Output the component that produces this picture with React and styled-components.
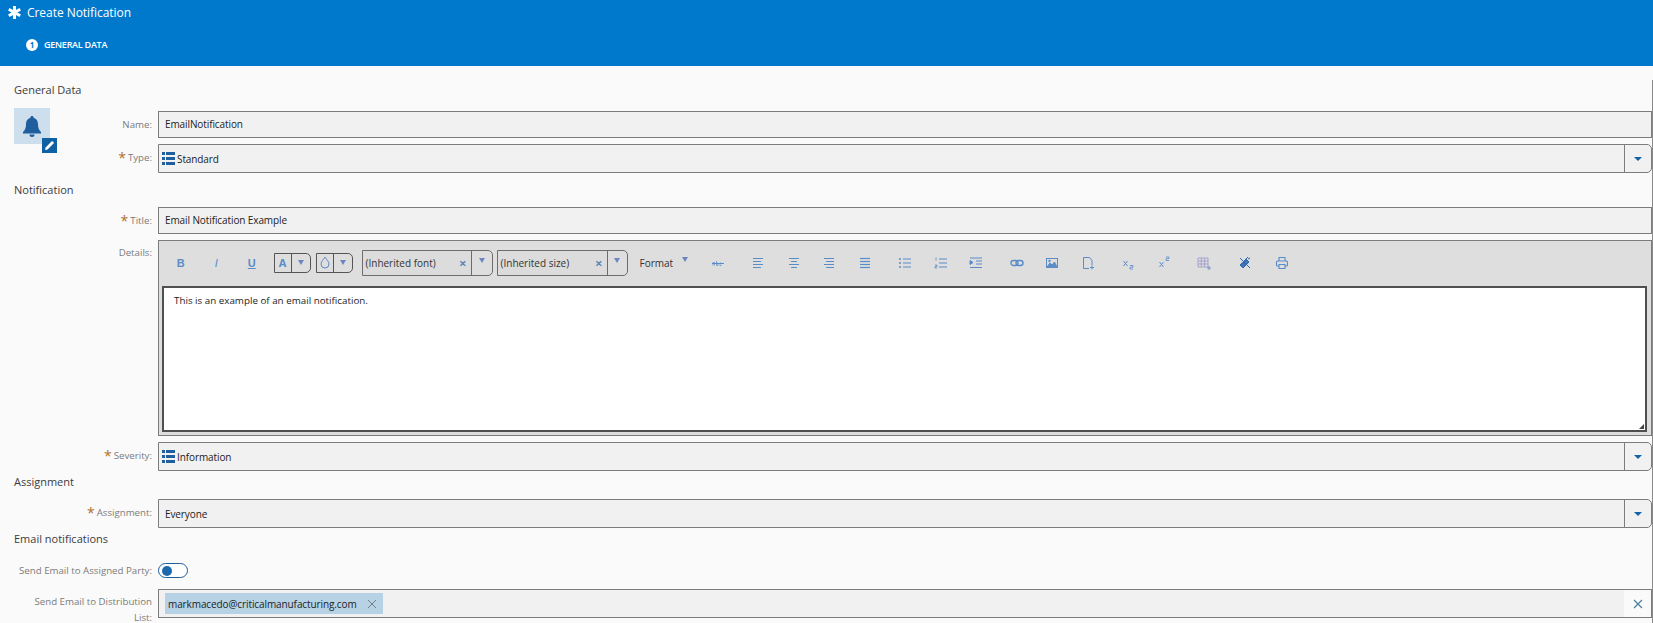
import React from 'react'
import styled, { createGlobalStyle } from 'styled-components'

const blue = '#5a8cc8'

const GlobalStyle = createGlobalStyle`
  html, body {
    margin: 0;
    padding: 0;
    height: 100%;
    overflow: hidden;
    background: #fafafa;
    font-family: "Open Sans", "Liberation Sans", sans-serif;
  }
  * { box-sizing: border-box; }
`

const Icon = ({ size = 14, children, fill = 'none', color = blue, sw = 1 }) => (
  <svg width={size} height={size} viewBox="0 0 14 14" fill={fill} stroke={color} strokeWidth={sw}>
    {children}
  </svg>
)

const ListIcon = () => (
  <svg width="13" height="13" viewBox="0 0 13 13" fill="#1f5f9e">
    <path d="M0 0h3v3H0zM4 0h9v3H4zM0 5h3v3H0zM4 5h9v3H4zM0 10h3v3H0zM4 10h9v3H4z" />
  </svg>
)

const lines = (rows) => rows.map(([a, b], i) => <path key={i} d={`M${a} ${2.5 + i * 3}H${b}`} />)

const toolIcons = {
  strike: (
    <Icon>
      <path d="M1 7.500h12" />
      <path d="M2 9.500V6.500h1.500V9.500M5.500 5v4.500h1.500V7H5.500M10.500 7H9v2.500h1.500" strokeWidth=".7" />
    </Icon>
  ),
  left: <Icon>{lines([[2, 12], [2, 10], [2, 12], [2, 10]])}</Icon>,
  center: <Icon>{lines([[2, 12], [4, 10], [2, 12], [4, 10]])}</Icon>,
  right: <Icon>{lines([[2, 12], [4, 12], [2, 12], [4, 12]])}</Icon>,
  justify: <Icon sw={1.2}>{lines([[2, 12], [2, 12], [2, 12], [2, 12]])}</Icon>,
  bullets: (
    <Icon>
      <path d="M5 3h8M5 7h8M5 11h8" />
      <path d="M1 3h2M1 7h2M1 11h2" strokeWidth="1.6" />
    </Icon>
  ),
  numbers: (
    <Icon>
      <path d="M5 3h8M5 7h8M5 11h8" />
      <path d="M2 1.500v3M1 9h2v1.500H1V12h2" strokeWidth=".8" />
    </Icon>
  ),
  indent: (
    <Icon>
      <path d="M1 2h12M7 5h6M7 8h6M1 11.500h12" />
      <path d="M1 4.500l3 2-3 2z" fill={blue} />
    </Icon>
  ),
  link: (
    <Icon sw={1.4}>
      <rect x="1" y="4.500" width="7" height="5" rx="2.500" />
      <rect x="6" y="4.500" width="7" height="5" rx="2.500" />
    </Icon>
  ),
  image: (
    <Icon>
      <rect x="1.500" y="2.500" width="11" height="9" />
      <path d="M2 11l3-4 2 2 2.500-3L12 11z" fill={blue} />
      <circle cx="4.500" cy="5" r=".8" fill={blue} />
    </Icon>
  ),
  doc: (
    <Icon>
      <path d="M8 12.500H2.500v-11h6l2.500 3V9" />
      <path d="M9 11.500h4M11 9.500v4" />
    </Icon>
  ),
  sub: (
    <Icon>
      <path d="M2.500 5l4 5M6.500 5l-4 5" />
      <path d="M9 9.500h3v1.700H9V13h3" strokeWidth=".8" />
    </Icon>
  ),
  sup: (
    <Icon>
      <path d="M2.500 6l4 5M6.500 6l-4 5" />
      <path d="M9 1h3v1.700H9v1.800h3" strokeWidth=".8" />
    </Icon>
  ),
  table: (
    <Icon color="#9a96c8" sw={0.8}>
      <path d="M1 2h10v9H1zM1 5h10M1 8h10M4.300 2v9M7.700 2v9" />
      <path d="M10 12h4M12 10v4" stroke={blue} />
    </Icon>
  ),
  brush: (
    <Icon fill="#3f74b8" color="#2f68ad">
      <path d="M5 6l3-3 3 3-3 3z" />
      <path d="M8 3l2-2M10 3l2-1M2 2l10 10" />
      <path d="M4.500 6.500L2 9l3 3 3-3z" />
    </Icon>
  ),
  print: (
    <Icon sw={1.1}>
      <path d="M4 5V1.500h6V5" />
      <rect x="1.500" y="5" width="11" height="5" rx="1" />
      <path d="M4 8.500h6v4H4z" fill="#dedede" />
    </Icon>
  ),
}

function Field({ label, required, children, short, tight, tall }) {
  return (
    <Row>
      <Label $short={short} $top={tight ? 0 : tall ? 5 : 6}>
        {required && <Req>*</Req>}
        {label}
      </Label>
      {children}
    </Row>
  )
}

function Combo({ icon, value }) {
  return (
    <ComboBox>
      <ComboValue $icon={icon}>
        {icon && <ListIcon />}
        {value}
      </ComboValue>
      <ComboButton><Caret /></ComboButton>
    </ComboBox>
  )
}

function FontSelect({ value, buttonWidth }) {
  return (
    <FontBox>
      <FontValue>
        <span>{value}</span>
        <FontClear>×</FontClear>
      </FontValue>
      <FontButton $width={buttonWidth}><SmallCaret /></FontButton>
    </FontBox>
  )
}

function App() {
  return (
    <Page>
      <GlobalStyle />
      <Header>
        <TitleRow>
          <svg width="13" height="13" viewBox="0 0 13 13" stroke="#fff" strokeWidth="3">
            <path d="M6.500 0v13M.8 3.200l11.400 6.600M.8 9.800l11.400-6.600" />
          </svg>
          <Title>Create Notification</Title>
        </TitleRow>
        <StepRow>
          <StepDot>1</StepDot>
          <StepName>GENERAL DATA</StepName>
        </StepRow>
      </Header>
      <Form>
        <Heading $top={14} $bottom={8}>General Data</Heading>
        <GeneralData>
          <Avatar>
            <svg width="20" height="21" viewBox="0 0 20 21" fill="#1f5f9e">
              <path d="M10 0c1 0 1.600.7 1.600 1.700C14.500 2.500 16 5 16 8c0 4 1 6 3 8v1.500H1V16c2-2 3-4 3-8 0-3 1.500-5.500 4.400-6.300C8.400.7 9 0 10 0z" />
              <path d="M7.500 18.500h5a2.500 2.500 0 0 1-5 0z" />
            </svg>
            <EditBadge>
              <svg width="11" height="11" viewBox="0 0 11 11" fill="#fff">
                <path d="M1 10l.6-2.600L7.500 1.500a1 1 0 0 1 1.400 0l.6.600a1 1 0 0 1 0 1.400L3.600 9.400z" />
              </svg>
            </EditBadge>
          </Avatar>
          <Fields $top={3}>
            <Field label="Name:" short><Input>EmailNotification</Input></Field>
            <Field label="Type:" required short><Combo icon value="Standard" /></Field>
          </Fields>
        </GeneralData>
        <Heading $top={7} $bottom={7}>Notification</Heading>
        <Fields>
          <Field label="Title:" required><Input>Email Notification Example</Input></Field>
          <Field label="Details:" tall>
            <Editor>
              <Toolbar>
                <ToolButton $weight="700">B</ToolButton>
                <ToolButton $italic>I</ToolButton>
                <ToolButton $weight="700" $under>U</ToolButton>
                <ColorPick $left={4}>
                  <ColorFace><ColorA>A</ColorA></ColorFace>
                  <ColorArrow><SmallCaret /></ColorArrow>
                </ColorPick>
                <ColorPick $left={5}>
                  <ColorFace>
                    <svg width="10" height="13" viewBox="0 0 10 13" fill="none" stroke={blue}>
                      <path d="M5 1c1 2 4 4.500 4 7a4 4 0 0 1-8 0c0-2.500 3-5 4-7z" />
                    </svg>
                  </ColorFace>
                  <ColorArrow><SmallCaret /></ColorArrow>
                </ColorPick>
                <FontSlot $left={9}><FontSelect value="(Inherited font)" buttonWidth={21} /></FontSlot>
                <FontSlot $left={4}><FontSelect value="(Inherited size)" buttonWidth={20} /></FontSlot>
                <FormatButton>
                  Format
                  <FormatCaret><SmallCaret /></FormatCaret>
                </FormatButton>
                <Tool $w={30}>{toolIcons.strike}</Tool>
                <Tool $w={35.500} $left={8}>{toolIcons.left}</Tool>
                <Tool $w={35.500}>{toolIcons.center}</Tool>
                <Tool $w={35.500}>{toolIcons.right}</Tool>
                <Tool $w={35.500}>{toolIcons.justify}</Tool>
                <Tool $w={35.500} $left={5}>{toolIcons.bullets}</Tool>
                <Tool $w={35.500}>{toolIcons.numbers}</Tool>
                <Tool $w={35.500}>{toolIcons.indent}</Tool>
                <Tool $w={35.500} $left={5}>{toolIcons.link}</Tool>
                <Tool $w={35.500}>{toolIcons.image}</Tool>
                <Tool $w={35.500}>{toolIcons.doc}</Tool>
                <Tool $w={35.500} $left={5}>{toolIcons.sub}</Tool>
                <Tool $w={35.500}>{toolIcons.sup}</Tool>
                <Tool $w={35.500} $left={5}>{toolIcons.table}</Tool>
                <Tool $w={35.500} $left={5}>{toolIcons.brush}</Tool>
                <Tool $w={35.500} $left={2}>{toolIcons.print}</Tool>
              </Toolbar>
              <EditorBody>
                This is an example of an email notification.
                <Grip />
              </EditorBody>
            </Editor>
          </Field>
          <Field label="Severity:" required><Combo icon value="Information" /></Field>
        </Fields>
        <Heading $top={1} $bottom={7}>Assignment</Heading>
        <Fields>
          <Field label="Assignment:" required><Combo value="Everyone" /></Field>
        </Fields>
        <Heading $top={1} $bottom={14}>Email notifications</Heading>
        <Fields $gap={10}>
          <Field label="Send Email to Assigned Party:" tight>
            <Toggle><Knob /></Toggle>
          </Field>
          <Field label="Send Email to Distribution List:" tall>
            <TagInput>
              <Chip>
                markmacedo@criticalmanufacturing.com
                <svg width="10" height="10" viewBox="0 0 10 10" stroke="#6f7f8c" strokeWidth="1">
                  <path d="M1 1l8 8M9 1l-8 8" />
                </svg>
              </Chip>
              <ClearCell>
                <svg width="10" height="10" viewBox="0 0 10 10" stroke="#4d7f9f" strokeWidth="1.200">
                  <path d="M1 1l8 8M9 1l-8 8" />
                </svg>
              </ClearCell>
            </TagInput>
          </Field>
        </Fields>
      </Form>
    </Page>
  )
}

const Page = styled.div`
  width: 1653px;
  height: 623px;
  overflow: hidden;
`

const Header = styled.header`
  height: 66px;
  background: #0079cc;
  color: #fff;
  padding: 6px 0 0 8px;
`

const TitleRow = styled.div`
  display: flex;
  align-items: center;
  gap: 6px;
  height: 13px;
`

const Title = styled.h1`
  margin: 0;
  font-size: 12px;
  font-weight: 400;
  letter-spacing: -0.05px;
  line-height: 13px;
`

const StepRow = styled.div`
  display: flex;
  align-items: center;
  gap: 6px;
  margin: 19px 0 0 18px;
`

const StepDot = styled.span`
  width: 12px;
  height: 12px;
  border-radius: 50%;
  background: #fff;
  color: #0079cc;
  font-size: 8px;
  font-weight: 700;
  line-height: 12px;
  text-align: center;
`

const StepName = styled.span`
  font-size: 9px;
  font-weight: 600;
  letter-spacing: -0.25px;
`

const Form = styled.main`
  height: 557px;
  border-right: 1px solid #8a8a8a;
  padding-left: 14px;
`

const Heading = styled.h2`
  margin: ${(p) => p.$top}px 0 ${(p) => p.$bottom}px;
  font-size: 11px;
  font-weight: 400;
  line-height: 20px;
  color: #3c3c3c;
`

const GeneralData = styled.section`
  display: flex;
`

const Avatar = styled.div`
  position: relative;
  flex: none;
  width: 36px;
  height: 36px;
  margin-right: 24px;
  background: #cddfec;
  display: flex;
  align-items: center;
  justify-content: center;
`

const EditBadge = styled.span`
  position: absolute;
  left: 28px;
  top: 30px;
  width: 15px;
  height: 15px;
  background: #1060a4;
  display: flex;
  align-items: center;
  justify-content: center;
`

const Fields = styled.div`
  flex: 1;
  display: flex;
  flex-direction: column;
  gap: ${(p) => p.$gap ?? 6}px;
  padding-top: ${(p) => p.$top || 0}px;
`

const Row = styled.div`
  display: flex;
  align-items: flex-start;
`

const Label = styled.label`
  flex: none;
  width: ${(p) => (p.$short ? 78 : 138)}px;
  margin-right: 6px;
  padding-top: ${(p) => p.$top}px;
  text-align: right;
  font-size: 9.700px;
  line-height: 16px;
  color: #7b7b7b;
`

const Req = styled.span`
  color: #b0702c;
  font-size: 14px;
  line-height: 10px;
  margin-right: 2px;
  vertical-align: -2px;
`

const Input = styled.div`
  flex: 1;
  height: 27px;
  background: #f1f1f1;
  border: 1px solid #7c7c7c;
  padding-left: 6px;
  font-size: 10px;
  letter-spacing: -0.1px;
  line-height: 25px;
  color: #222;
`

const ComboBox = styled.div`
  flex: 1;
  display: flex;
  height: 29px;
  background: #f1f1f1;
  border: 1px solid #7c7c7c;
  border-radius: 0 5px 5px 0;
`

const ComboValue = styled.div`
  flex: 1;
  display: flex;
  align-items: center;
  gap: 2px;
  padding-left: ${(p) => (p.$icon ? 3 : 6)}px;
  font-size: 10px;
  letter-spacing: -0.1px;
  color: #222;
`

const ComboButton = styled.div`
  flex: none;
  width: 27px;
  border-left: 1px solid #7c7c7c;
  display: flex;
  align-items: center;
  justify-content: center;
`

const Caret = styled.span`
  border-top: 4px solid #1063a8;
  border-left: 4px solid transparent;
  border-right: 4px solid transparent;
`

const SmallCaret = styled.span`
  display: block;
  border-top: 5px solid #6c86c2;
  border-left: 3.500px solid transparent;
  border-right: 3.500px solid transparent;
`

const Editor = styled.div`
  flex: 1;
  height: 196px;
  border: 1px solid #7c7c7c;
  background: #dedede;
  padding: 0 4px 4px 3px;
`

const Toolbar = styled.div`
  display: flex;
  align-items: center;
  height: 45px;
  padding: 0 0 2px 1px;
`

const ToolButton = styled.span`
  flex: none;
  width: 35.500px;
  text-align: center;
  font-size: 11px;
  color: ${blue};
  font-weight: ${(p) => p.$weight || 400};
  font-style: ${(p) => (p.$italic ? 'italic' : 'normal')};
  text-decoration: ${(p) => (p.$under ? 'underline' : 'none')};
  font-family: "Liberation Sans", sans-serif;
`

const Tool = styled.span`
  flex: none;
  width: ${(p) => p.$w}px;
  margin-left: ${(p) => p.$left || 0}px;
  display: flex;
  justify-content: center;
`

const ColorPick = styled.div`
  flex: none;
  display: flex;
  width: 37px;
  height: 20px;
  margin-left: ${(p) => p.$left}px;
  border: 1px solid #555;
  border-radius: 0 5px 5px 0;
`

const ColorFace = styled.span`
  width: 17px;
  border-right: 1px solid #555;
  display: flex;
  align-items: center;
  justify-content: center;
`

const ColorA = styled.span`
  color: ${blue};
  font-size: 11px;
  font-weight: 700;
`

const ColorArrow = styled.span`
  flex: 1;
  display: flex;
  align-items: center;
  justify-content: center;
`

const FontSlot = styled.div`
  flex: none;
  margin-left: ${(p) => p.$left}px;
`

const FontBox = styled.div`
  display: flex;
  width: 131px;
  height: 26px;
  border: 1px solid #6d6d6d;
  border-radius: 0 5px 5px 0;
`

const FontValue = styled.div`
  flex: 1;
  display: flex;
  align-items: center;
  justify-content: space-between;
  padding: 0 4px 0 3px;
  background: #dcdcdc;
  font-size: 10px;
  color: #333;
`

const FontClear = styled.span`
  color: #5b86b8;
  font-size: 13px;
  font-weight: 700;
  line-height: 10px;
`

const FontButton = styled.div`
  flex: none;
  width: ${(p) => p.$width}px;
  border-left: 1px solid #6d6d6d;
  display: flex;
  justify-content: center;
  padding-top: 7px;
`

const FormatButton = styled.div`
  flex: none;
  display: flex;
  align-items: center;
  width: 63px;
  margin-left: 12px;
  font-size: 10px;
  color: #333;
`

const FormatCaret = styled.span`
  margin: -6px 0 0 9px;
`

const EditorBody = styled.div`
  position: relative;
  height: 146px;
  background: #fff;
  border: 2px solid #4f4f4f;
  padding: 6px 9px 6px 10px;
  font-size: 9.800px;
  line-height: 14px;
  color: #1c1c1c;
`

const Grip = styled.span`
  position: absolute;
  right: 1px;
  bottom: 1px;
  border-bottom: 5px solid #444;
  border-left: 5px solid transparent;
`

const Toggle = styled.div`
  display: flex;
  align-items: center;
  width: 30px;
  height: 15px;
  padding-left: 3px;
  background: #fff;
  border: 1px solid #1c5f9d;
  border-radius: 8px;
`

const Knob = styled.span`
  width: 10px;
  height: 10px;
  border-radius: 50%;
  background: #1e68ad;
`

const TagInput = styled.div`
  flex: 1;
  display: flex;
  align-items: center;
  justify-content: space-between;
  height: 29px;
  padding-left: 6px;
  background: #f1f1f1;
  border: 1px solid #7c7c7c;
`

const Chip = styled.span`
  display: flex;
  align-items: center;
  justify-content: space-between;
  width: 218px;
  height: 21px;
  padding: 0 6px 0 3px;
  background: #b7d2e5;
  font-size: 10px;
  letter-spacing: -0.1px;
  color: #222;
`

const ClearCell = styled.span`
  align-self: stretch;
  flex: none;
  width: 27px;
  background: #fafafa;
  display: flex;
  align-items: center;
  justify-content: center;
`

export default App
